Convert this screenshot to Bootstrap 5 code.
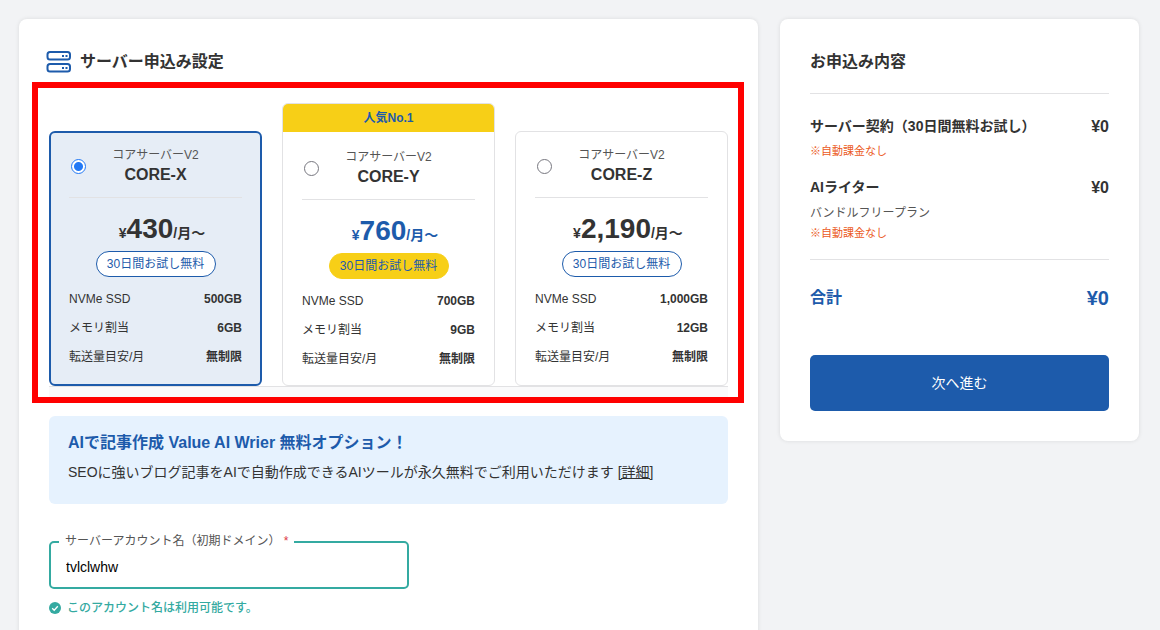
<!DOCTYPE html>
<html lang="ja">
<head>
<meta charset="utf-8">
<meta name="viewport" content="width=device-width, initial-scale=1">
<title>サーバー申込み設定</title>
<link href="https://cdn.jsdelivr.net/npm/bootstrap@5.3.0/dist/css/bootstrap.min.css" rel="stylesheet">
<style>
  :root { --blue: #1d5bab; --ink: #333; --line: #e2e2e4; --teal: #34aaa1; --yellow: #f7cf17; }
  body { background: #f2f3f5; color: var(--ink); font-family: "Liberation Sans", "Noto Sans CJK JP", sans-serif; font-size: 14px; line-height: 24px; }
  .page { padding: 19px 21px 0 19px; gap: 22px; }
  .panel { background: #fff; border-radius: 8px; box-shadow: 0 0 4px rgba(0, 0, 0, .1); }
  .setup { padding: 31px 14px 30px 13px; min-width: 0; }
  .summary { width: 359px; padding: 31px 30px 30px; }
  h1, h2, h3 { font-size: 16px; line-height: 24px; font-weight: 700; margin: 0; }
  .setup-title { gap: 8px; margin: 0 0 8px 14px; }

  .ring { border: 6px solid #f00; padding: 15px 10px 0 11px; }
  .plans { display: grid; grid-template-columns: repeat(3, minmax(0, 1fr)); gap: 20px; }
  .plan { background: #fff; border: 1px solid var(--line); border-radius: 6px; overflow: hidden; }
  .plan-body { padding: 14px 19px 13px; }
  .plan-popular .plan-body { padding: 16px 19px 11px; }
  .plan-selected { background: #e6edf6; border: 2px solid var(--blue); }
  .plan-selected .plan-body { padding: 13px 18px 12px; }
  .ribbon { background: var(--yellow); color: var(--blue); font-size: 12px; font-weight: 700; line-height: 28px; }
  .plan-head { display: grid; grid-template-columns: 19px 1fr 19px; padding-bottom: 11px; border-bottom: 1px solid var(--line); }
  .plan-head input { appearance: none; width: 15px; height: 15px; margin: 0 0 0 2px; border: 1px solid #77777f; border-radius: 50%; background: #fff; }
  .plan-head input:checked { border-color: #2379f5; background: radial-gradient(circle, #2379f5 4px, #fff 5px); }
  .series { font-size: 12px; line-height: 18px; color: #555; }
  .plan-name { font-size: 16px; line-height: 22px; font-weight: 700; }
  .price { padding: 13px 0 4px 13px; line-height: 36px; font-weight: 700; font-size: 14px; white-space: nowrap; height: 53px; }
  .price .yen { font-size: 14px; }
  .price .amount { font-size: 28px; }
  .plan-popular .price { color: var(--blue); }
  .trial { width: 120px; border: 1px solid var(--blue); border-radius: 13px; background: #fff; color: var(--blue); font-size: 12px; line-height: 24px; margin: 0 auto 8px; }
  .plan-popular .trial { background: var(--yellow); border-color: var(--yellow); }
  .specs { font-size: 12px; line-height: 29px; margin: 0; }
  .specs th { font-weight: 400; padding: 0; }
  .specs td { font-weight: 700; padding: 0; }
  .plans-foot { height: 11px; border-top: 1px solid var(--line); background: #fafafb; }

  .inset { margin-left: 17px; margin-right: 16px; }
  .promo { margin-top: 13px; padding: 15px 19px 21px; border-radius: 6px; background: #e6f2fe; }
  .promo h2, .total { color: var(--blue); }
  .promo p { margin: 6px 0 0; line-height: 22px; }
  .promo a { color: inherit; }

  .account { position: relative; max-width: 360px; margin-top: 37px; }
  .account label { position: absolute; left: 10px; top: -9px; padding: 0 6px; background: #fff; color: #555; font-size: 12px; line-height: 18px; white-space: pre; }
  .account input { height: 48px; border: 2px solid var(--teal); border-radius: 5px; padding: 4px 15px 0; font-size: 14px; color: #000; }
  .valid { gap: 6px; margin-top: 10px; color: var(--teal); font-size: 12px; line-height: 18px; font-weight: 500; }

  .summary h2 { padding-bottom: 19px; border-bottom: 1px solid var(--line); }
  .items { padding: 20px 0 17px; border-bottom: 1px solid var(--line); }
  .item + .item { margin-top: 15px; }
  .item h3 { font-size: 14px; }
  .item-price { font-size: 16px; line-height: 26px; font-weight: 700; }
  .notice { color: #eb5a23; font-size: 11px; line-height: 18px; margin: 2px 0 0; }
  .subplan { color: #555; font-size: 12px; line-height: 18px; margin: 3px 0 0; }
  .total { padding-top: 23px; font-size: 16px; line-height: 30px; font-weight: 700; }
  .total-price { font-size: 20px; }
  .next { margin-top: 42px; height: 56px; border: 0; border-radius: 5px; background: var(--blue); color: #fff; font-size: 14px; }
</style>
</head>
<body>
<div class="page d-flex align-items-start">
  <main class="panel setup flex-grow-1">
    <div class="setup-title d-flex align-items-center">
      <svg width="26" height="24" viewBox="0 0 26 24" fill="none" stroke="#1d5bab" stroke-width="2" aria-hidden="true">
        <rect x="1.500" y="2" width="22.500" height="7.500" rx="2.500"/>
        <rect x="1.500" y="14" width="22.500" height="7.500" rx="2.500"/>
        <path d="M16 6h2M19.500 6h2M16 18h2M19.500 18h2"/>
      </svg>
      <h1>サーバー申込み設定</h1>
    </div>

    <div class="ring">
      <div class="plans align-items-end">
        <section class="plan plan-selected">
          <div class="plan-body">
            <div class="plan-head align-items-center">
              <input type="radio" name="plan" id="core-x" checked>
              <label for="core-x" class="text-center"><span class="series d-block">コアサーバーV2</span><span class="plan-name d-block">CORE-X</span></label>
            </div>
            <div class="price text-center"><span class="yen">¥</span><span class="amount">430</span>/月～</div>
            <div class="trial text-center">30日間お試し無料</div>
            <table class="specs w-100">
              <tr><th scope="row">NVMe SSD</th><td class="text-end">500GB</td></tr>
              <tr><th scope="row">メモリ割当</th><td class="text-end">6GB</td></tr>
              <tr><th scope="row">転送量目安/月</th><td class="text-end">無制限</td></tr>
            </table>
          </div>
        </section>
        <section class="plan plan-popular">
          <div class="ribbon text-center">人気No.1</div>
          <div class="plan-body">
            <div class="plan-head align-items-center">
              <input type="radio" name="plan" id="core-y">
              <label for="core-y" class="text-center"><span class="series d-block">コアサーバーV2</span><span class="plan-name d-block">CORE-Y</span></label>
            </div>
            <div class="price text-center"><span class="yen">¥</span><span class="amount">760</span>/月～</div>
            <div class="trial text-center">30日間お試し無料</div>
            <table class="specs w-100">
              <tr><th scope="row">NVMe SSD</th><td class="text-end">700GB</td></tr>
              <tr><th scope="row">メモリ割当</th><td class="text-end">9GB</td></tr>
              <tr><th scope="row">転送量目安/月</th><td class="text-end">無制限</td></tr>
            </table>
          </div>
        </section>
        <section class="plan">
          <div class="plan-body">
            <div class="plan-head align-items-center">
              <input type="radio" name="plan" id="core-z">
              <label for="core-z" class="text-center"><span class="series d-block">コアサーバーV2</span><span class="plan-name d-block">CORE-Z</span></label>
            </div>
            <div class="price text-center"><span class="yen">¥</span><span class="amount">2,190</span>/月～</div>
            <div class="trial text-center">30日間お試し無料</div>
            <table class="specs w-100">
              <tr><th scope="row">NVMe SSD</th><td class="text-end">1,000GB</td></tr>
              <tr><th scope="row">メモリ割当</th><td class="text-end">12GB</td></tr>
              <tr><th scope="row">転送量目安/月</th><td class="text-end">無制限</td></tr>
            </table>
          </div>
        </section>
      </div>
      <div class="plans-foot"></div>
    </div>

    <section class="promo inset">
      <h2>AIで記事作成 Value AI Wrier 無料オプション！</h2>
      <p>SEOに強いブログ記事をAIで自動作成できるAIツールが永久無料でご利用いただけます <a href="#">[詳細]</a></p>
    </section>

    <div class="account inset">
      <label for="account">サーバーアカウント名（初期ドメイン） <span class="text-danger">*</span></label>
      <input type="text" id="account" class="w-100" value="tvlclwhw">
    </div>
    <div class="valid inset d-flex align-items-center">
      <svg width="12" height="12" viewBox="0 0 12 12" aria-hidden="true"><circle cx="6" cy="6" r="6" fill="#34aaa1"/><path d="M3.200 6.200l2 2 3.600-4" fill="none" stroke="#fff" stroke-width="1.300"/></svg>
      <span>このアカウント名は利用可能です。</span>
    </div>
  </main>

  <aside class="panel summary flex-shrink-0">
    <h2>お申込み内容</h2>
    <div class="items">
      <div class="item">
        <div class="d-flex justify-content-between"><h3>サーバー契約（30日間無料お試し）</h3><span class="item-price">¥0</span></div>
        <p class="notice">※自動課金なし</p>
      </div>
      <div class="item">
        <div class="d-flex justify-content-between"><h3>AIライター</h3><span class="item-price">¥0</span></div>
        <p class="subplan">バンドルフリープラン</p>
        <p class="notice">※自動課金なし</p>
      </div>
    </div>
    <div class="total d-flex justify-content-between"><span>合計</span><span class="total-price">¥0</span></div>
    <button type="button" class="next btn w-100">次へ進む</button>
  </aside>
</div>
<script src="https://cdn.jsdelivr.net/npm/bootstrap@5.3.0/dist/js/bootstrap.bundle.min.js"></script>
</body>
</html>
